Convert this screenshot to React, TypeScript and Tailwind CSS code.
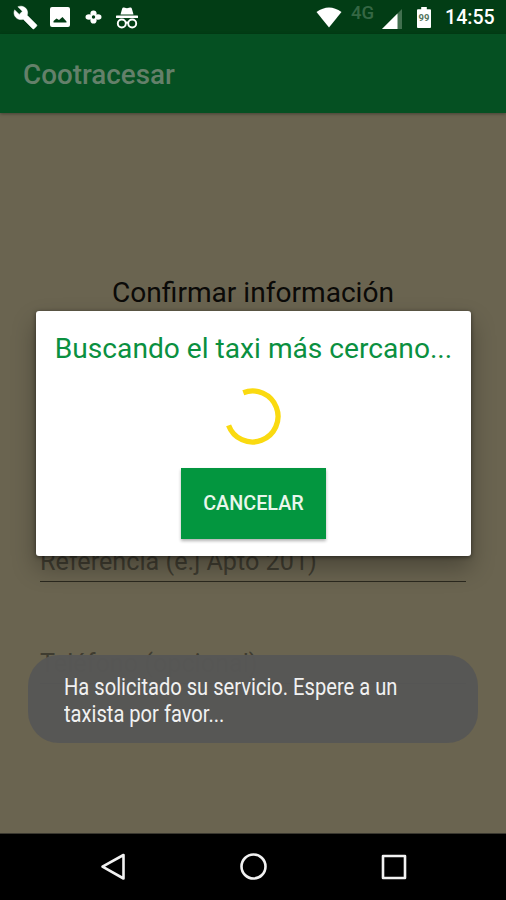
import type { ReactNode } from "react"

export default function App() {
  return (
    <main className="relative flex h-[900px] w-[506px] flex-col overflow-hidden bg-[#6a6450] font-['Roboto',sans-serif]">
      <StatusBar />

      {/* App bar */}
      <header className="flex h-[79px] shrink-0 items-center bg-[#055022] pl-[23px] pt-[3px] shadow-[0_1px_3px_rgba(0,0,0,0.35)]">
        <h1 className="text-[27.800px] font-medium leading-8 text-[#64806a]">Cootracesar</h1>
      </header>

      {/* Form behind the dialog */}
      <section className="flex flex-1 flex-col px-10 pt-[162px]">
        <h2 className="text-center text-[28.100px] leading-9 whitespace-nowrap text-[#0b0a08]">
          Confirmar información
        </h2>
        <div className="mt-[234px]">
          <Field label="Referencia (e.j Apto 201)" />
        </div>
        <div className="mt-[65px]">
          <Field label="Teléfono (opcional)" />
        </div>
      </section>

      <NavigationBar />

      {/* Dialog */}
      <div
        role="dialog"
        className="absolute left-[36px] top-[311px] flex h-[245px] w-[435px] flex-col items-center rounded-[3px] bg-white pt-5 shadow-[0_12px_24px_rgba(0,0,0,0.3),0_1px_4px_rgba(0,0,0,0.5)]"
      >
        <p className="text-[28.150px] leading-9 whitespace-nowrap text-[#0a9040]">
          Buscando el taxi más cercano...
        </p>
        <Spinner />
        <button className="mt-[22px] h-[71px] w-[145px] shrink-0 bg-[#03963f] text-[19.800px] font-medium text-[#e9f6ec] shadow-[0_2px_3px_rgba(0,0,0,0.3)]">
          CANCELAR
        </button>
      </div>

      {/* Toast */}
      <div className="absolute left-[28px] top-[655px] h-[88px] w-[450px] rounded-[31px] bg-[#575756]/97 pl-9 pt-[19px]">
        <p className="origin-left scale-x-[0.875] text-[23px] leading-[27px] whitespace-nowrap text-[#f1f1f1]">
          Ha solicitado su servicio. Espere a un
          <br />
          taxista por favor...
        </p>
      </div>
    </main>
  )
}

function Field({ label }: { label: string }) {
  return (
    <div className="h-[37px] border-b border-[#2b291f]">
      <span className="block text-[25.200px] leading-[34px] whitespace-nowrap text-[#3f3c30]">{label}</span>
    </div>
  )
}

function Spinner() {
  return (
    <svg className="mt-[21px] mr-px shrink-0" width="58" height="58" viewBox="0 0 58 58" fill="none">
      <path d="M19.300 4.700A25.500 25.500 0 1 1 4.600 37.300" stroke="#fada10" strokeWidth="5.300" />
    </svg>
  )
}

function StatusBar() {
  return (
    <div className="flex h-[34px] shrink-0 items-center bg-[#023d15] text-white">
      <svg className="ml-[13px]" width="25" height="25" viewBox="0 0 24 24" fill="currentColor">
        <path d="M22.7 19l-9.1-9.1c.9-2.3.4-5-1.5-6.9-2-2-5-2.4-7.4-1.3L9 6 6 9 1.6 4.7C.4 7.1.9 10.1 2.900 12.1c1.900 1.900 4.600 2.400 6.900 1.500l9.100 9.100c.4.4 1 .4 1.400 0l2.300-2.300c.5-.4.5-1.100.1-1.400z" stroke="currentColor" strokeWidth="0.5" />
      </svg>
      <svg className="ml-[12px]" width="20" height="20" viewBox="0 0 20 20">
        <rect width="20" height="20" rx="2" fill="currentColor" />
        <path d="M3.500 15.500v-1.500l3-2.500 2.500 1.500 3.500-3 4 4.500v1z" fill="#023d15" />
      </svg>
      <svg className="ml-[15px]" width="17" height="14" viewBox="0 0 17 14" fill="currentColor">
        <ellipse cx="8.5" cy="3.5" rx="3.1" ry="3.1" />
        <ellipse cx="8.5" cy="10.5" rx="3.1" ry="3.1" />
        <ellipse cx="4" cy="7" rx="3.5" ry="2.8" />
        <ellipse cx="13" cy="7" rx="3.5" ry="2.8" />
        <circle cx="8.5" cy="7" r="1.7" fill="#023d15" />
      </svg>
      {/* Incognito */}
      <svg className="mt-[3px] ml-[13px]" width="24" height="24" viewBox="0 0 24 24" fill="none">
        <path d="M5.500 7.500L7.200 1.500Q7.600 .2 9 .6l3 .7 3-.7q1.400-.4 1.800.9l1.700 6z" fill="currentColor" />
        <rect x="1" y="8.500" width="22" height="2.600" rx="0.6" fill="currentColor" />
        <circle cx="6.800" cy="16.500" r="4" stroke="currentColor" strokeWidth="1.900" />
        <circle cx="17.200" cy="16.500" r="4" stroke="currentColor" strokeWidth="1.900" />
        <path d="M10.500 16q1.500-1 3 0" stroke="currentColor" strokeWidth="1.800" />
      </svg>

      <div className="ml-auto flex items-center pr-[10px]">
        <svg width="26" height="21" viewBox="0 0 26 21" fill="currentColor">
          <path d="M0.500 5Q13-4 25.500 5L13 20.500z" />
        </svg>
        <span className="ml-[9px] -mt-[9px] w-[25px] text-[18.500px] font-medium leading-5 text-[#356744]">4G</span>
        <svg className="ml-[6px] mt-[3px]" width="20" height="20" viewBox="0 0 20 20">
          <path d="M20 0v20H0z" fill="#42704f" />
          <path d="M15.500 4.500V20H0z" fill="#fff" />
        </svg>
        <span className="relative ml-[15px] flex h-[21px] w-[14px]">
          <svg width="14" height="21" viewBox="0 0 15 21" preserveAspectRatio="none" fill="currentColor">
            <path d="M4.500 0h6v2.300H14q1 0 1 1V20q0 1-1 1H1q-1 0-1-1V3.300q0-1 1-1h3.500z" />
          </svg>
          <span className="absolute inset-x-0 top-[5px] text-center text-[9.500px] font-bold leading-3 text-[#53755c]">
            99
          </span>
        </span>
        <span className="mt-px ml-[14px] w-[51px] text-[19.600px] font-medium leading-6">14:55</span>
      </div>
    </div>
  )
}

function NavIcon({ children }: { children: ReactNode }) {
  return (
    <svg width="30" height="30" viewBox="0 0 30 30" fill="none" stroke="#f2f2f2" strokeWidth="2.600" strokeLinejoin="round">
      {children}
    </svg>
  )
}

function NavigationBar() {
  return (
    <nav className="flex h-[67px] shrink-0 items-center justify-between border-t border-[#3a3830] bg-black pl-[98px] pr-[97px]">
      <NavIcon>
        <path d="M25.500 3v23.500L4.500 14.700z" />
      </NavIcon>
      <NavIcon>
        <circle cx="14.500" cy="14.500" r="12" />
      </NavIcon>
      <NavIcon>
        <rect x="4" y="4" width="22" height="22" />
      </NavIcon>
    </nav>
  )
}
